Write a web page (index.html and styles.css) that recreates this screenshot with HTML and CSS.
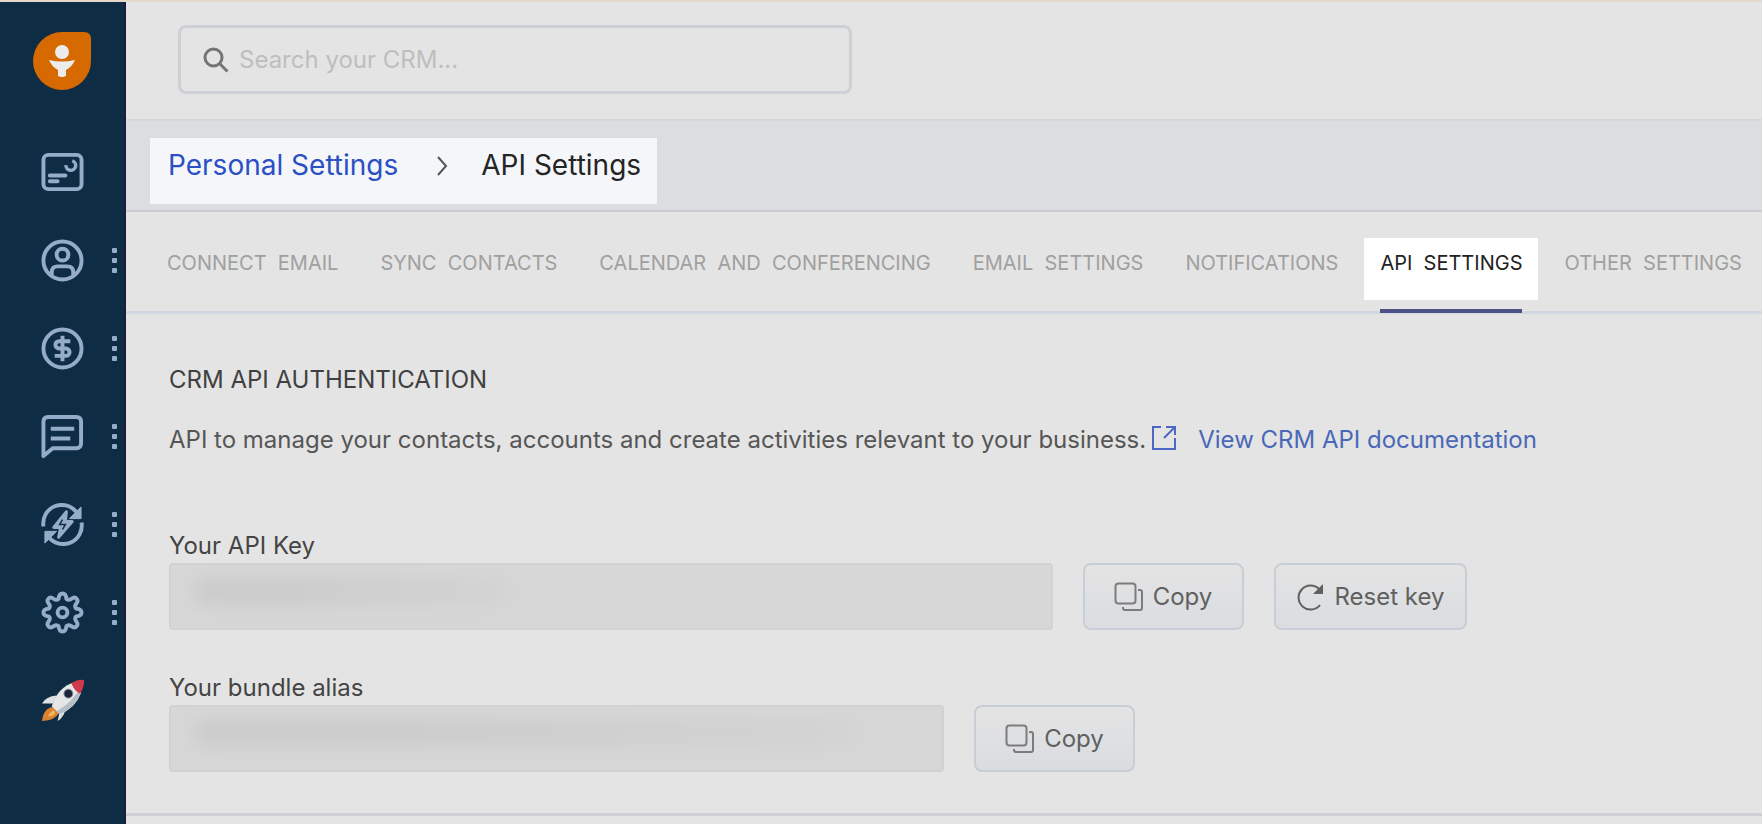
FILE: index.html
```html
<!DOCTYPE html>
<html lang="en">
<head>
<meta charset="utf-8">
<meta name="viewport" content="width=device-width, initial-scale=1">
<title>API Settings</title>
<link rel="stylesheet" href="styles.css">
</head>
<body>
<div class="app">
  <nav class="sidebar" aria-label="Main">
    <a class="logo" href="#" aria-label="Home">
      <svg width="58" height="58" viewBox="1 1 58 58"><path d="M30 1h22q7 0 7 7v22A29 29 0 1 1 30 1z" fill="#d66a00"/><circle cx="30" cy="21" r="7" fill="#ececec"/><path d="M17 29q13 3 26 0q-3 7-9 10v6q-4 2-8 0v-6q-6-3-9-10z" fill="#ececec"/></svg>
    </a>
    <a class="nav-item" href="#" aria-label="Dashboard">
      <svg class="nav-icon" viewBox="0 0 44 44"><rect x="2.500" y="4" width="39" height="35" rx="5"/><path d="M9 25h16M9 31h8" stroke-linecap="round"/><path d="M25.500 14.500A5 5 0 1 0 32 10" stroke-width="3.500"/></svg>
    </a>
    <a class="nav-item" href="#" aria-label="Contacts">
      <svg class="nav-icon" viewBox="0 0 44 44"><circle cx="22" cy="22" r="19.500"/><circle cx="22" cy="16" r="6"/><path d="M11 37v-3q0-6 6-6h10q6 0 6 6v3"/></svg>
      <span class="dots"></span>
    </a>
    <a class="nav-item" href="#" aria-label="Deals">
      <svg class="nav-icon" viewBox="0 0 44 44"><circle cx="22" cy="22" r="19.500"/><path d="M30 14.500H18.500a3.750 3.750 0 0 0 0 7.500h7a3.750 3.750 0 0 1 0 7.500H14M22 9v26"/></svg>
      <span class="dots"></span>
    </a>
    <a class="nav-item" href="#" aria-label="Conversations">
      <svg class="nav-icon" viewBox="0 0 44 44"><path stroke-linejoin="round" d="M2.500 42V7q0-5 5-5H36q5 0 5 5v22q0 5-5 5H12z"/><path d="M10 14h24M10 24h20"/></svg>
      <span class="dots"></span>
    </a>
    <a class="nav-item" href="#" aria-label="Automation">
      <svg class="nav-icon" viewBox="0 0 44 44"><path d="M2.500 24A19 19 0 0 1 36 9M41.500 20A19 19 0 0 1 8 35"/><path d="M41 4v12H29zM4 41V29h12z" fill="currentColor" stroke-width="1"/><path d="M26 9L13 25h7l-2 10 14-16h-7z" fill="currentColor" stroke-width="3" stroke-linejoin="round"/><path d="M22 17l-3 5h6l-3 5" stroke="#0e2c44" stroke-width="1.500"/></svg>
      <span class="dots"></span>
    </a>
    <a class="nav-item" href="#" aria-label="Admin settings">
      <svg class="nav-icon" viewBox="0 0 44 44"><path stroke-linejoin="round" d="M22 2.500Q25.500 2.500 26 8Q28 10 31 8Q34.500 5.500 36.500 8Q38.500 10 36 13Q34 16 36 18Q41.500 18.500 41.500 22Q41.500 25.500 36 26Q34 28 36 31Q38.500 34 36.500 36Q34.500 38.500 31 36Q28 34 26 36Q25.500 41.500 22 41.500Q18.500 41.500 18 36Q16 34 13 36Q9.500 38.500 7.500 36Q5.500 34 8 31Q10 28 8 26Q2.500 25.500 2.500 22Q2.500 18.500 8 18Q10 16 8 13Q5.500 10 7.500 8Q9.500 5.500 13 8Q16 10 18 8Q18.500 2.500 22 2.500z"/><circle cx="22" cy="22" r="5"/></svg>
      <span class="dots"></span>
    </a>
    <a class="nav-item" href="#" aria-label="Get started">
      <svg class="nav-icon nav-icon-filled" viewBox="0 0 44 44"><path d="M10 29q7-1 8 6q-3 7-17 8q1-11 9-14z" fill="#d9822f"/><path d="M7 38q3-5 6-6q2 2 1 4q-2 2-7 2z" fill="#f3b65f"/><path d="M1 25q4-7 15-8l-4 8zM17 43q7-4 10-17l-8 8z" fill="#dde1e6"/><path d="M11 28Q17 8 35 3q6 4 6 11Q35 30 19 36z" fill="#e6e6e6"/><path d="M41 14Q35 30 19 36l-3-3Q32 24 41 8z" fill="#b6bec8"/><path d="M31 4Q38 0 44 1Q45 7 40 15Q34 12 31 4z" fill="#d03a48"/><circle cx="28" cy="15" r="4.500" fill="#1a2437" stroke="#7c8797" stroke-width="1"/></svg>
    </a>
  </nav>

  <div class="page">
    <header class="topbar">
      <label class="search">
        <svg class="search-icon" viewBox="0 0 26 26"><circle cx="10.500" cy="10.500" r="8.500"/><path d="M16.500 16.500l8 8"/></svg>
        <input type="text" placeholder="Search your CRM..." aria-label="Search your CRM">
      </label>
    </header>

    <div class="crumb-bar">
      <nav class="crumbs" aria-label="Breadcrumb">
        <a href="#">Personal Settings</a>
        <svg class="chevron" viewBox="0 0 12 22"><path d="M2 2l8 9-8 9"/></svg>
        <span>API Settings</span>
      </nav>
    </div>

    <nav class="tabs" aria-label="Settings">
      <a class="tab" href="#">CONNECT&nbsp; EMAIL</a>
      <a class="tab" href="#">SYNC&nbsp; CONTACTS</a>
      <a class="tab" href="#">CALENDAR&nbsp; AND&nbsp; CONFERENCING</a>
      <a class="tab" href="#">EMAIL&nbsp; SETTINGS</a>
      <a class="tab" href="#">NOTIFICATIONS</a>
      <a class="tab tab-active" href="#" aria-current="page"><span>API&nbsp; SETTINGS</span></a>
      <a class="tab" href="#">OTHER&nbsp; SETTINGS</a>
    </nav>

    <main class="content">
      <h1>CRM API AUTHENTICATION</h1>
      <p class="intro">API to manage your contacts, accounts and create activities relevant to your business.<a href="#"><svg class="ext-icon" viewBox="0 0 26 26"><path d="M10 2H2v22h22V13M15 2h9v8M24 2L13 13"/></svg>View CRM API documentation</a></p>

      <div class="field">
        <label for="api-key">Your API Key</label>
        <div class="field-row">
          <div class="masked masked-key"><input id="api-key" type="text" readonly></div>
          <button type="button" class="btn"><svg class="copy-icon" viewBox="0 0 30 30"><rect x="1.500" y="1.500" width="20" height="20" rx="3"/><path d="M24 8h2q2 0 2 2v16q0 2-2 2H11q-2 0-2-2v-1"/></svg>Copy</button>
          <button type="button" class="btn btn-reset"><svg class="reset-icon" viewBox="0 0 28 28"><path d="M24 22A12 12 0 1 1 23 6"/><path d="M27 1v10H17z" fill="currentColor" stroke="none"/></svg>Reset key</button>
        </div>
      </div>

      <div class="field">
        <label for="alias">Your bundle alias</label>
        <div class="field-row">
          <div class="masked masked-alias"><input id="alias" type="text" readonly></div>
          <button type="button" class="btn"><svg class="copy-icon" viewBox="0 0 30 30"><rect x="1.500" y="1.500" width="20" height="20" rx="3"/><path d="M24 8h2q2 0 2 2v16q0 2-2 2H11q-2 0-2-2v-1"/></svg>Copy</button>
        </div>
      </div>
    </main>
  </div>
</div>
</body>
</html>
```

FILE: styles.css
```css
* { box-sizing: border-box; }

body {
  margin: 0;
  font-family: Inter, "Liberation Sans", sans-serif;
  font-size: 24px;
  line-height: 32px;
  color: #484848;
  background: #e4e4e4;
}

a { color: inherit; text-decoration: none; }

.app {
  display: flex;
  min-height: 100vh;
  border-top: 2px solid #e5d8cc;
}

.sidebar {
  flex: none;
  width: 126px;
  display: flex;
  flex-direction: column;
  align-items: center;
  padding-top: 30px;
  background: #0e2c44;
  border-right: 2px solid #1b1c42;
}

.logo { height: 58px; margin-bottom: 38px; }
.logo svg { display: block; }

.nav-item {
  position: relative;
  width: 100%;
  height: 88px;
  display: flex;
  align-items: center;
  justify-content: center;
  color: #94acca;
}

.nav-icon {
  width: 43px;
  height: 43px;
  fill: none;
  stroke: currentColor;
  stroke-width: 4;
}
.nav-icon-filled { stroke: none; }

.dots {
  position: absolute;
  right: 7px;
  top: 32px;
  width: 5px;
  height: 5px;
  background: #94acca;
  border-radius: 1px;
  box-shadow: 0 10px #94acca, 0 20px #94acca;
}

.page { flex: 1; min-width: 0; }

.topbar { padding: 23px 52px 25px; }

.search {
  display: flex;
  align-items: center;
  gap: 10px;
  width: 44%;
  height: 69px;
  padding: 0 22px;
  border: 3px solid #cdd1d5;
  border-radius: 8px;
}
.search-icon { flex: none; width: 26px; height: 26px; fill: none; stroke: #747474; stroke-width: 3; }
.search input {
  flex: 1;
  min-width: 0;
  padding: 0;
  border: 0;
  outline: 0;
  background: none;
  font: inherit;
  color: #484848;
}
.search input::placeholder { color: #bdbebf; opacity: 1; }

.crumb-bar {
  padding: 17px 24px 6px;
  background: #dbdde0;
  border-top: 2px solid #d5d7db;
  border-bottom: 2px solid #c9cbce;
}
.crumbs {
  display: inline-flex;
  align-items: flex-start;
  height: 66px;
  padding: 11px 16px 0 18px;
  background: #f4f6fa;
  color: #242424;
  font-size: 28px;
  vertical-align: top;
}
.crumbs a { color: #2b4fc4; }
.chevron { width: 12px; height: 22px; margin: 6px 33px 0 38px; fill: none; stroke: #555; stroke-width: 2; }

.tabs {
  display: flex;
  justify-content: space-between;
  height: 102px;
  padding: 26px 20px 0 41px;
  border-bottom: 3px solid #d3d7df;
  font-size: 20px;
  color: #a0a0a0;
  white-space: nowrap;
}
.tab { padding-top: 9px; }
.tab-active {
  height: 75px;
  margin: 0 -16px;
  padding: 0 16px;
  color: #222;
  background: linear-gradient(#fff, #fff) 0 0 / 100% 62px no-repeat;
}
.tab-active span { display: block; height: 75px; padding-top: 9px; border-bottom: 4px solid #4c5285; }

.content { padding: 50px 43px 41px; border-bottom: 3px solid #cfd0d5; }

h1 { margin: 0; font-size: 24px; line-height: 32px; font-weight: 400; color: #404040; }
.intro { margin: 28px 0 74px; white-space: nowrap; color: #565656; }
.intro a { color: #4a68b8; }
.ext-icon { width: 26px; height: 26px; margin: 0 21px 0 5px; vertical-align: -3px; fill: none; stroke: #4d68c4; stroke-width: 2; }

.field + .field { margin-top: 42px; }
.field label { display: block; color: #444; }
.field-row { display: flex; gap: 30px; margin-top: 1px; }

.masked {
  height: 67px;
  background: #d7d7d7;
  border: 2px solid #d2d2d2;
  border-radius: 4px;
  overflow: hidden;
}
.masked::before {
  content: "";
  display: block;
  height: 30px;
  margin: 11px 0 -41px 22px;
  border-radius: 15px;
  background: linear-gradient(90deg, #cccccc 0 30%, #d3d3d3);
  filter: blur(8px);
}
.masked input { display: block; position: relative; width: 100%; height: 100%; padding: 0 20px; border: 0; outline: 0; background: none; font: inherit; }
.masked-key { width: 57%; }
.masked-key::before { width: 36%; }
.masked-alias { width: 50%; }
.masked-alias::before { width: 86%; }

.btn {
  display: inline-flex;
  align-items: center;
  justify-content: center;
  gap: 9px;
  width: 161px;
  height: 67px;
  padding: 0;
  border: 2px solid #c8ced5;
  border-radius: 8px;
  background: linear-gradient(#e4e4e4, #dadce0);
  font: inherit;
  color: #606060;
}
.btn-reset { gap: 11px; width: 193px; }
.copy-icon { width: 30px; height: 30px; fill: none; stroke: #7c7c7c; stroke-width: 2; }
.reset-icon { width: 28px; height: 28px; fill: none; stroke: currentColor; stroke-width: 2; }
```
